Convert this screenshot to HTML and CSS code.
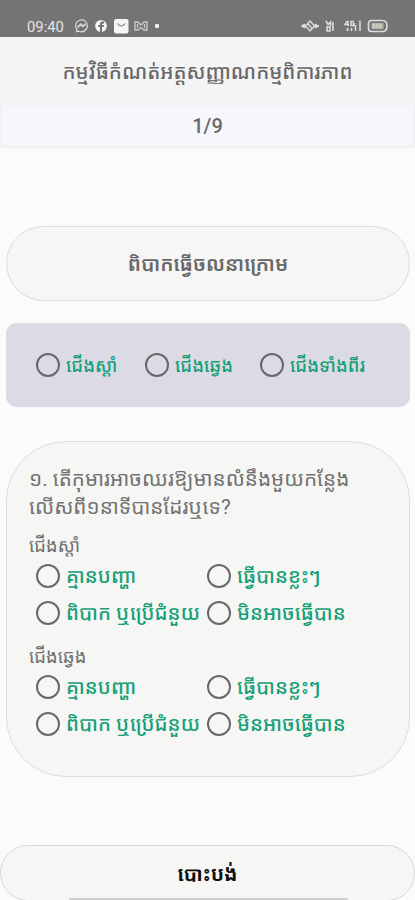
FILE: index.html
```html
<!DOCTYPE html>
<html lang="km">
<head>
<meta charset="utf-8">
<title>កម្មវិធីកំណត់អត្តសញ្ញាណកម្មពិការភាព</title>
<link rel="stylesheet" href="styles.css">
</head>
<body>
<div class="screen">
  <div class="status">
    <span class="clock">09:40</span>
    <svg class="status-left" width="90" height="16" viewBox="0 0 90 16">
      <g fill="none" stroke="#ddd" stroke-width="1.2">
        <path d="M3 11.7A5.9 5.9 0 1 1 5 13.2L2.5 13.8Z"/>
        <path d="M3.5 9.5 6.7 6.3 8.7 8.3 11.5 6" stroke-width="1.7"/>
      </g>
      <circle cx="27" cy="8" r="5.9" fill="#f4f4f4"/>
      <path d="M26 14V9H24.2V7H26V5.8Q26 3.5 28.3 3.5H30V5.4H29Q28 5.4 28 6.3V7H30L29.7 9H28V14Z" fill="#747474"/>
      <rect x="40" y="1" width="14.5" height="14.5" rx="2" fill="#f6f6f6"/>
      <path d="M43.5 5.5Q47.3 10.5 51 5.5" fill="none" stroke="#777" stroke-width="1.2"/>
      <path d="M61 4H64L67 7 70 4H73V12H70L67 9.5 64 12H61ZM63.5 6V10M70.5 6V10" fill="none" stroke="#ccc" stroke-width="1.3"/>
      <circle cx="83" cy="8" r="2.2" fill="#f4f4f4"/>
    </svg>
    <svg class="status-right" width="89" height="16" viewBox="0 0 89 16">
      <path d="M1 8 5 6V10ZM19 8 15 6V10Z" fill="#ddd" stroke="#ddd"/>
      <g fill="none" stroke="#ddd" stroke-width="1.4">
        <path d="M5.500 8 10 3 14.500 8 10 13ZM8 6 12 10.500"/>
        <path d="M26 3 28 6.500 30.500 4V8M27 8.500V13H30V9H26M33 4V13" stroke-width="1.6"/>
        <path d="M47 3 45 6.500H49M48 3V8M54 3.500H51V7.500H54V5.500H52.500M51.500 13V10M55.500 13V7M60 13V2.500" stroke-width="1.5"/>
        <path d="M47.500 10V13" stroke-width="1.8"/>
        <path d="M71.500 2.500H82.500Q87 2.500 87 8Q87 13.500 82.500 13.500H71.500Q68.500 13.500 68.500 10.500V5.500Q68.500 2.500 71.500 2.500Z" stroke-width="1.6"/>
      </g>
      <rect x="71.5" y="5" width="12" height="6" rx="1" fill="#b9b7a9"/>
      <path d="M74 6V10M77 6V10M80 6V10" stroke="#e3e2d8"/>
    </svg>
  </div>
  <header class="header"><span>កម្មវិធីកំណត់អត្តសញ្ញាណកម្មពិការភាព</span></header>
  <div class="progress"><span>1/9</span></div>
  <div class="topic"><span>ពិបាកធ្វើចលនាក្រោម</span></div>
  <div class="sides">
    <label class="option"><i class="radio"></i><span>ជើងស្តាំ</span></label>
    <label class="option"><i class="radio"></i><span>ជើងឆ្វេង</span></label>
    <label class="option"><i class="radio"></i><span>ជើងទាំងពីរ</span></label>
  </div>
  <section class="card">
    <p class="question"><span>១. តើកុមារអាចឈរឱ្យមានលំនឹងមួយកន្លែង</span><br><span>លើសពី១នាទីបានដែរឬទេ?</span></p>
    <p class="side"><span>ជើងស្តាំ</span></p>
    <div class="answers">
      <label class="option"><i class="radio"></i><span>គ្មានបញ្ហា</span></label>
      <label class="option"><i class="radio"></i><span>ធ្វើបានខ្លះៗ</span></label>
      <label class="option"><i class="radio"></i><span>ពិបាក ឬប្រើជំនួយ</span></label>
      <label class="option"><i class="radio"></i><span>មិនអាចធ្វើបាន</span></label>
    </div>
    <p class="side"><span>ជើងឆ្វេង</span></p>
    <div class="answers">
      <label class="option"><i class="radio"></i><span>គ្មានបញ្ហា</span></label>
      <label class="option"><i class="radio"></i><span>ធ្វើបានខ្លះៗ</span></label>
      <label class="option"><i class="radio"></i><span>ពិបាក ឬប្រើជំនួយ</span></label>
      <label class="option"><i class="radio"></i><span>មិនអាចធ្វើបាន</span></label>
    </div>
  </section>
  <div class="cancel"><span>បោះបង់</span><i class="home-bar"></i></div>
</div>
</body>
</html>
```
FILE: styles.css
```css
* { box-sizing: border-box; }
body { margin: 0; font-family: Roboto, "Noto Sans Khmer", "Noto Sans", "DejaVu Sans", sans-serif; color: #686868; background: #fbfbfb; }
p { margin: 0; }
.screen { width: 415px; height: 900px; overflow: hidden; display: flex; flex-direction: column; }
.status { height: 37px; flex: none; background: #747474; display: flex; padding: 18px 26px 0 27px; }
.clock { font-size: 14.8px; line-height: 18px; color: #e4e4e4; width: 47px; }
.status-right { margin-left: auto; }
.header { height: 66px; flex: none; background: #f5f5f5; display: flex; align-items: center; justify-content: center; font-size: 20.2px; font-weight: 500; white-space: nowrap; padding-top: 1px; }
.progress { height: 45px; flex: none; background: #f5f7fb; border: 2px solid #eff1f3; display: flex; align-items: center; justify-content: center; font-size: 20px; font-weight: 500; }
.topic { height: 75px; flex: none; margin: 78px 5px 0 6px; border: 1px solid #dddcd7; border-radius: 38px; background: #f6f6f4; display: flex; align-items: center; justify-content: center; font-size: 20px; font-weight: 600; }
.sides { height: 84px; flex: none; margin: 22px 5px 0 6px; padding: 0 0 0 30px; border-radius: 11px; background: #dcdbe5; display: grid; grid-template-columns: 109px 115px 1fr; align-items: center; }
.option { display: flex; align-items: center; gap: 6px; height: 36px; white-space: nowrap; color: #16a077; font-size: 18.2px; font-weight: 500; }
.radio { width: 24px; height: 24px; flex: none; border: 2px solid #686868; border-radius: 50%; }
.card { height: 336px; flex: none; margin: 34px 5px 0 6px; padding: 23px 0 0 22px; border: 1px solid #dddcd7; border-radius: 60px; background: #f6f6f4; }
.question { font-size: 20.7px; line-height: 28px; height: 60px; white-space: nowrap; color: #727272; }
.side { font-size: 18.4px; height: 33px; line-height: 42px; color: #727272; }
.answers + .side { height: 37px; line-height: 50px; }
.answers { display: grid; grid-template-columns: 171px 1fr; grid-auto-rows: 37px; align-items: center; padding-left: 7px; margin-top: -1px; margin-bottom: 1px; }
.answers .option { font-size: 20.1px; }
.answers .option span { margin-top: -1px; }
.cancel { height: 56px; flex: none; margin-top: 68px; border: 1px solid #d8d8d5; border-radius: 30px; background: #f6f6f4; color: #111; display: flex; align-items: center; justify-content: center; font-size: 19.6px; font-weight: 700; position: relative; }
.home-bar { position: absolute; left: 68px; bottom: -1px; width: 279px; height: 3px; background: #cfcfcf; border-radius: 2px; }
```
